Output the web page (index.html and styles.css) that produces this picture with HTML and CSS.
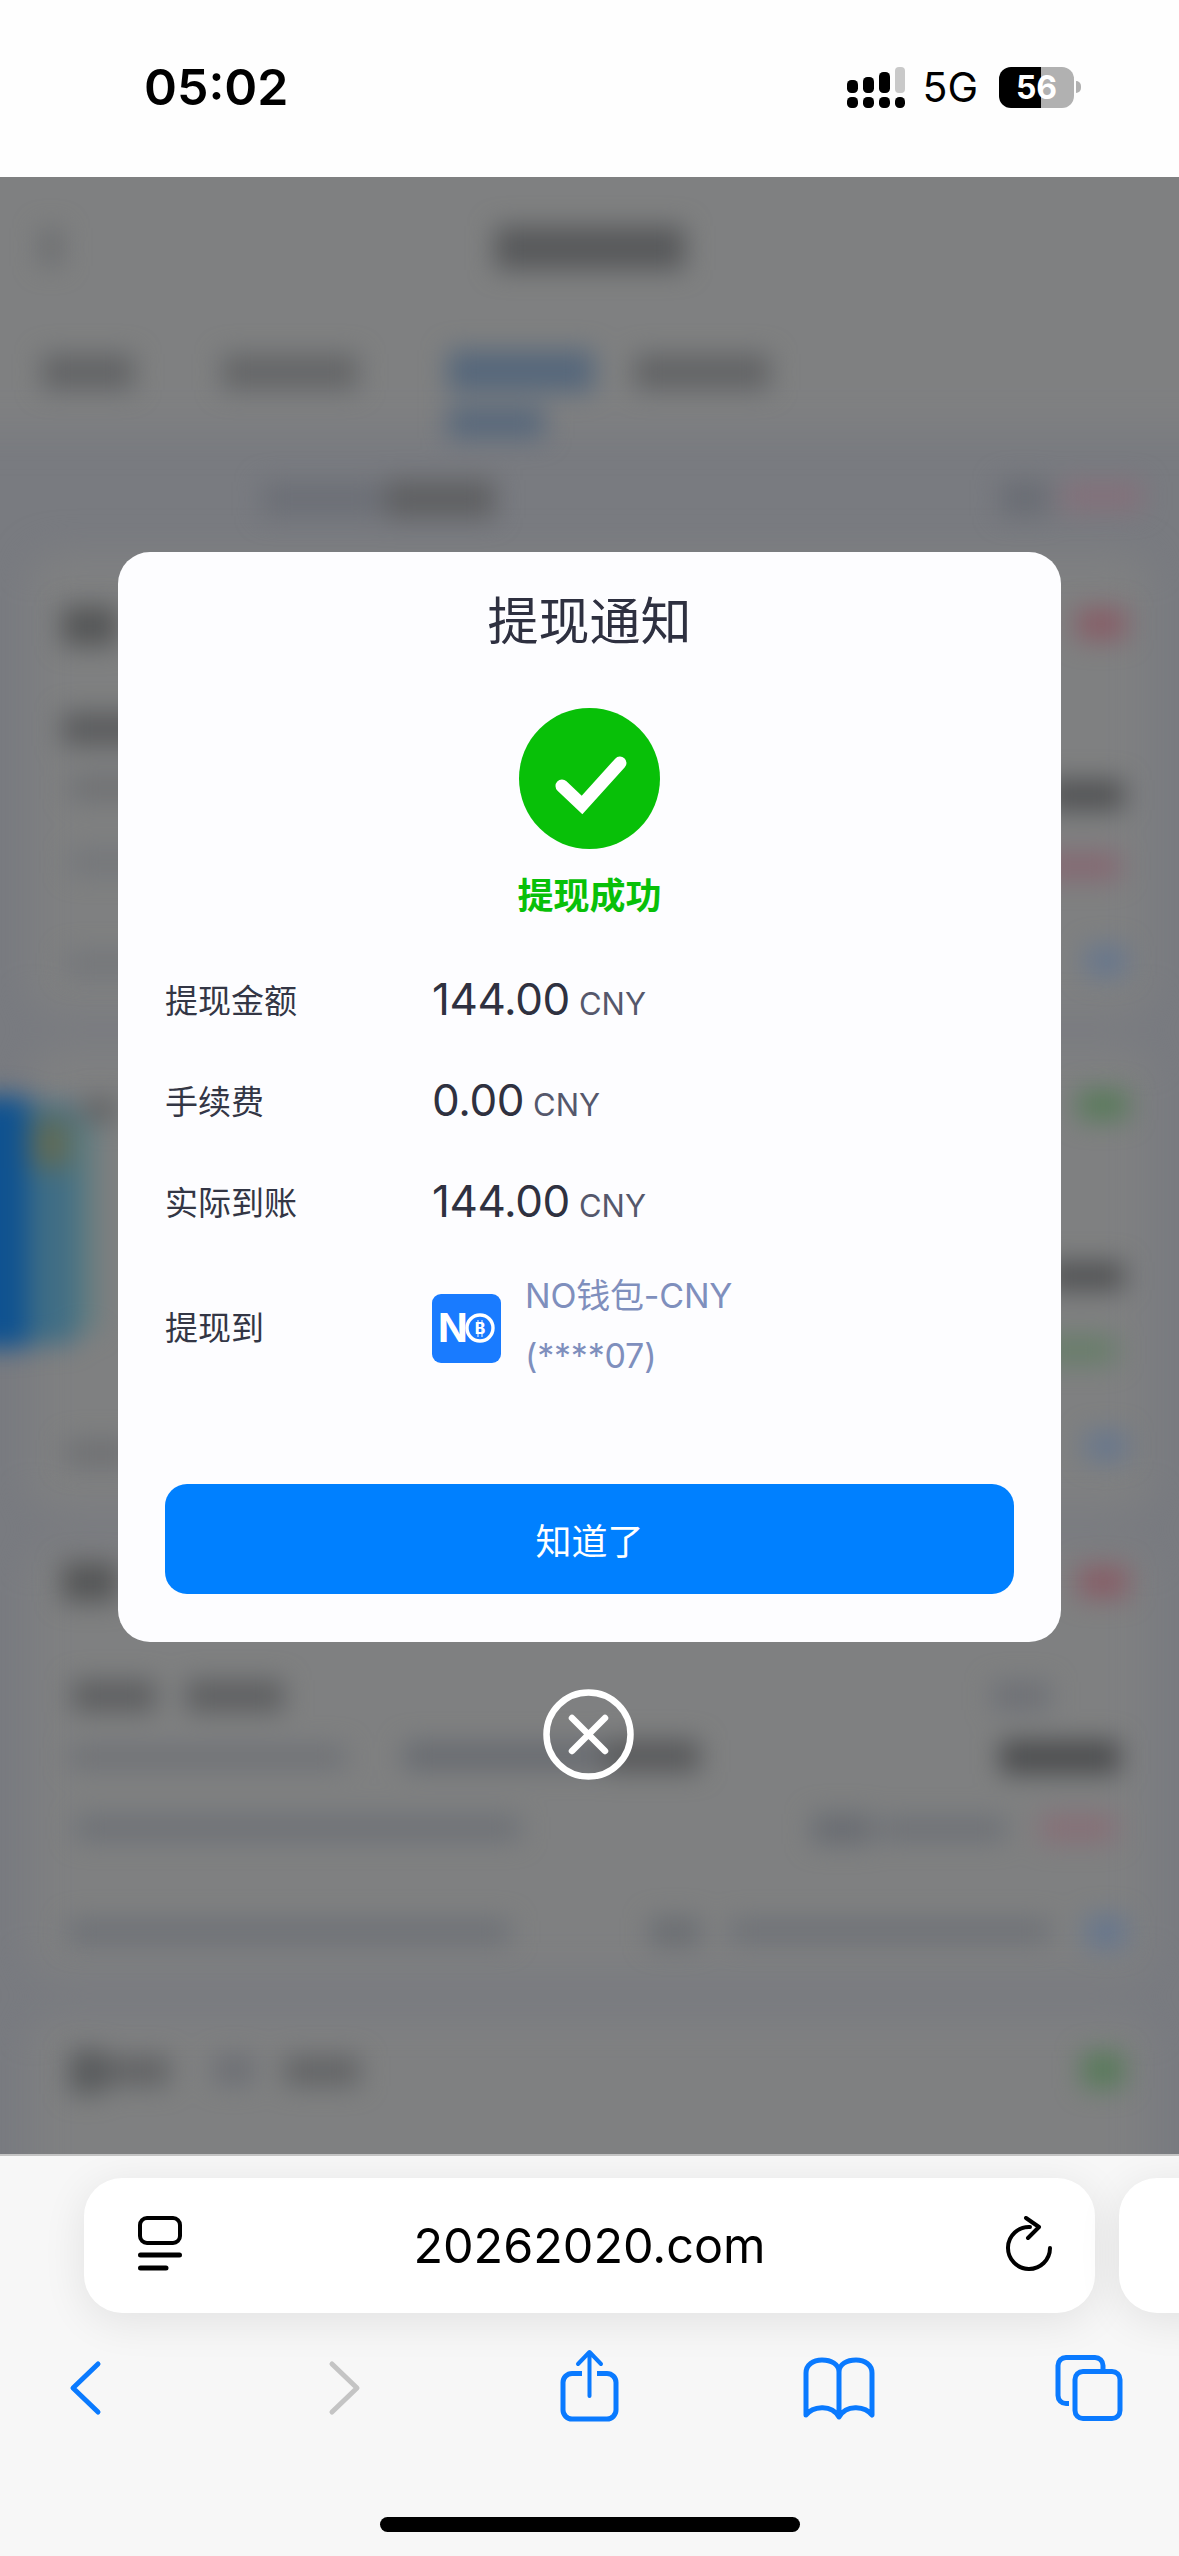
FILE: index.html
```html
<!DOCTYPE html>
<html lang="zh-CN">
<head>
  <meta charset="UTF-8">
  <title>提现通知</title>
  <meta name="viewport" content="width=device-width, initial-scale=1">
  <link rel="stylesheet" href="styles.css">
</head>
<body>
  <header class="status-bar">
    <div class="status-time">05:02</div>
    <div class="status-right">
      <svg class="signal" width="58" height="41" viewBox="0 0 58 41">
        <rect x="0" y="30" width="11" height="11" rx="4.5"/>
        <rect x="16" y="30" width="11" height="11" rx="4.5"/>
        <rect x="32" y="30" width="11" height="11" rx="4.5"/>
        <rect x="48" y="30" width="10" height="11" rx="4.5"/>
        <rect x="0" y="13" width="11" height="13" rx="4.5"/>
        <rect x="16" y="10" width="11" height="16" rx="4.5"/>
        <rect x="32" y="5" width="11" height="21" rx="4.5"/>
        <rect x="48" y="0" width="10" height="26" rx="4" fill="#c9c9c9"/>
      </svg>
      <span class="network">5G</span>
      <div class="battery">56</div>
    </div>
  </header>

  <main class="page">
    <!-- page behind the dialog, blurred and dimmed -->
    <svg class="backdrop" width="1179" height="1977" viewBox="0 177 1179 1977" preserveAspectRatio="none">
      <defs>
        <filter id="soft" x="-5%" y="-5%" width="110%" height="110%" color-interpolation-filters="sRGB">
          <feGaussianBlur stdDeviation="13"/>
        </filter>
        <filter id="softer" x="-5%" y="-5%" width="110%" height="110%" color-interpolation-filters="sRGB">
          <feGaussianBlur stdDeviation="18"/>
        </filter>
      </defs>
      <rect x="0" y="177" width="1179" height="1977" fill="#797b80"/>
      <g filter="url(#softer)">
        <rect x="-60" y="120" width="1300" height="312" fill="#7f8081"/>
        <rect x="30" y="552" width="1120" height="462" rx="28" fill="#7f8081"/>
        <rect x="30" y="1046" width="1120" height="466" rx="28" fill="#7f8081"/>
        <rect x="30" y="1546" width="1120" height="430" rx="28" fill="#7f8081"/>
        <rect x="30" y="2016" width="1120" height="190" rx="28" fill="#7f8081"/>
      </g>
      <g filter="url(#soft)">
        <rect x="40" y="228" width="22" height="38" fill="#6d6e70"/>
        <rect x="495" y="226" width="190" height="44" fill="#58595b"/>

        <rect x="42" y="354" width="92" height="36" fill="#636466"/>
        <rect x="222" y="354" width="136" height="36" fill="#656668"/>
        <rect x="448" y="350" width="146" height="42" fill="#56677b"/>
        <rect x="448" y="408" width="96" height="30" fill="#56677b"/>
        <rect x="634" y="354" width="136" height="36" fill="#636466"/>

        <rect x="262" y="482" width="120" height="34" fill="#6c6f76"/>
        <rect x="385" y="480" width="110" height="38" fill="#5f6062"/>
        <rect x="1000" y="480" width="50" height="36" fill="#6a6d74"/>
        <rect x="1062" y="482" width="80" height="28" fill="#84707a"/>

        <rect x="62" y="606" width="56" height="40" fill="#555657"/>
        <rect x="1076" y="608" width="50" height="32" fill="#875d67"/>
        <rect x="62" y="712" width="120" height="34" fill="#5b5c5e"/>
        <rect x="70" y="776" width="80" height="24" fill="#6f7073"/>
        <rect x="1046" y="780" width="78" height="30" fill="#505153"/>
        <rect x="70" y="850" width="80" height="24" fill="#74767a"/>
        <rect x="1040" y="852" width="80" height="28" fill="#856872"/>
        <rect x="66" y="952" width="80" height="24" fill="#74767a"/>
        <rect x="1086" y="946" width="40" height="30" fill="#66768e"/>

        <rect x="-30" y="1096" width="58" height="252" fill="#0f5290"/>
        <rect x="28" y="1104" width="46" height="240" fill="#3f6d85"/>
        <rect x="74" y="1116" width="22" height="216" fill="#5e7b80"/>
        <rect x="30" y="1118" width="40" height="50" fill="#5f6b58"/>
        <rect x="82" y="1098" width="36" height="24" fill="#636466"/>
        <rect x="1078" y="1090" width="50" height="30" fill="#587a5a"/>
        <rect x="1046" y="1262" width="78" height="28" fill="#505153"/>
        <rect x="1040" y="1336" width="76" height="28" fill="#677d69"/>
        <rect x="66" y="1440" width="70" height="26" fill="#6f7073"/>
        <rect x="1086" y="1432" width="40" height="28" fill="#66768e"/>

        <rect x="62" y="1562" width="56" height="40" fill="#555657"/>
        <rect x="1078" y="1566" width="50" height="32" fill="#875d67"/>
        <rect x="72" y="1680" width="84" height="32" fill="#5e5f61"/>
        <rect x="186" y="1680" width="98" height="32" fill="#5e5f61"/>
        <rect x="992" y="1682" width="58" height="28" fill="#6e7076"/>
        <rect x="70" y="1746" width="276" height="22" fill="#6f7176"/>
        <rect x="404" y="1742" width="200" height="28" fill="#686b71"/>
        <rect x="604" y="1740" width="96" height="32" fill="#58595b"/>
        <rect x="1000" y="1740" width="120" height="34" fill="#4c4d4f"/>
        <rect x="76" y="1816" width="444" height="24" fill="#6d7076"/>
        <rect x="812" y="1814" width="60" height="30" fill="#696c72"/>
        <rect x="880" y="1818" width="126" height="22" fill="#6d7076"/>
        <rect x="1040" y="1814" width="76" height="28" fill="#876f77"/>
        <rect x="68" y="1920" width="442" height="24" fill="#6d7076"/>
        <rect x="650" y="1918" width="50" height="28" fill="#6a6d72"/>
        <rect x="730" y="1920" width="320" height="22" fill="#6d7076"/>
        <rect x="1086" y="1916" width="40" height="32" fill="#66768e"/>

        <rect x="70" y="2050" width="34" height="44" fill="#585a5c"/>
        <rect x="104" y="2056" width="66" height="30" fill="#626365"/>
        <rect x="214" y="2056" width="40" height="28" fill="#6c6e74"/>
        <rect x="284" y="2056" width="76" height="30" fill="#636466"/>
        <rect x="1082" y="2052" width="42" height="36" fill="#587a5a"/>
      </g>
    </svg>

    <div class="overlay">
      <section class="dialog">
        <h2 class="dialog-title">提现通知</h2>
        <svg class="success-icon" width="141" height="141" viewBox="0 0 141 141">
          <circle cx="70.5" cy="70.5" r="70.5" fill="#08c008"/>
          <path d="M43 78 L63 97 L101 55" fill="none" stroke="#fff" stroke-width="13" stroke-linecap="round"/>
        </svg>
        <div class="success-text">提现成功</div>

        <div class="info-row first">
          <div class="info-label">提现金额</div>
          <div class="info-value">144.00 <span class="unit">CNY</span></div>
        </div>
        <div class="info-row">
          <div class="info-label">手续费</div>
          <div class="info-value">0.00 <span class="unit">CNY</span></div>
        </div>
        <div class="info-row">
          <div class="info-label">实际到账</div>
          <div class="info-value">144.00 <span class="unit">CNY</span></div>
        </div>
        <div class="info-row wallet-row">
          <div class="info-label">提现到</div>
          <svg class="wallet-logo" width="69" height="69" viewBox="0 0 69 69">
            <rect width="69" height="69" rx="9" fill="#197bff"/>
            <text x="6" y="48" font-family="Inter, sans-serif" font-weight="700" font-size="39" fill="#fff">N</text>
            <circle cx="48" cy="34" r="13" fill="none" stroke="#fff" stroke-width="3.4"/>
            <text x="48" y="40" text-anchor="middle" font-family="Inter, sans-serif" font-weight="700" font-size="16" fill="#fff">B</text>
            <path d="M46 26 V43 M50 26 V43" fill="none" stroke="#fff" stroke-width="1"/>
          </svg>
          <div class="wallet-name">NO钱包-CNY<br>(****07)</div>
        </div>

        <button class="confirm-btn">知道了</button>
      </section>

      <svg class="close-icon" width="91" height="91" viewBox="0 0 91 91">
        <circle cx="45.5" cy="45.5" r="42" fill="none" stroke="#fff" stroke-width="6.5"/>
        <path d="M29 29 L62 62 M62 29 L29 62" fill="none" stroke="#fff" stroke-width="6.5" stroke-linecap="round"/>
      </svg>
    </div>
  </main>

  <footer class="browser-bar">
    <div class="url-row">
      <div class="url-pill">
        <svg class="reader-icon" width="44" height="56" viewBox="0 0 44 56">
          <rect x="2" y="2" width="40" height="25" rx="7" fill="none" stroke="#000" stroke-width="4"/>
          <path d="M2.5 39 H41.5 M2.5 52 H28" fill="none" stroke="#000" stroke-width="5" stroke-linecap="round"/>
        </svg>
        <div class="url-text">20262020.com</div>
        <svg class="reload-icon" width="50" height="56" viewBox="0 0 50 56">
          <path d="M26 11 A21 21 0 1 0 46 32" fill="none" stroke="#000" stroke-width="4" stroke-linecap="round"/>
          <path d="M22 2 L35 11 L24 22" fill="none" stroke="#000" stroke-width="4" stroke-linecap="round" stroke-linejoin="round"/>
        </svg>
      </div>
      <div class="url-pill next"></div>
    </div>

    <nav class="nav-row">
      <svg width="80" height="80" viewBox="0 0 80 80">
        <path d="M52 19 L27 43 L52 67" fill="none" stroke="#0a7aff" stroke-width="5" stroke-linecap="round" stroke-linejoin="round"/>
      </svg>
      <svg width="80" height="80" viewBox="0 0 80 80">
        <path d="M35 19 L60 43 L35 67" fill="none" stroke="#c4c4c4" stroke-width="5" stroke-linecap="round" stroke-linejoin="round"/>
      </svg>
      <svg width="80" height="80" viewBox="1 0 80 80">
        <path d="M35 28.5 H25 a9 9 0 0 0 -9 9 V65 a9 9 0 0 0 9 9 H60 a9 9 0 0 0 9 -9 V37.5 a9 9 0 0 0 -9 -9 H50" fill="none" stroke="#0a7aff" stroke-width="5"/>
        <path d="M42.5 8 V51 M31 19 L42.5 7 L54 19" fill="none" stroke="#0a7aff" stroke-width="4" stroke-linecap="round" stroke-linejoin="round"/>
      </svg>
      <svg width="80" height="80" viewBox="0 0 80 80">
        <path d="M41 27 C41 19 33 15 24 15 C15 15 8 20 8 28 V70 C14 62 33 58 41 72 C49 58 68 62 74 70 V28 C74 20 67 15 58 15 C49 15 41 19 41 27 V72" fill="none" stroke="#0a7aff" stroke-width="5" stroke-linejoin="round"/>
      </svg>
      <svg width="80" height="80" viewBox="0 0 80 80">
        <path d="M20 58.5 H17 a8 8 0 0 1 -8 -8 V20.5 a8 8 0 0 1 8 -8 H46 a8 8 0 0 1 8 8 V24" fill="none" stroke="#0a7aff" stroke-width="5"/>
        <rect x="26" y="26.5" width="45" height="47" rx="8" fill="none" stroke="#0a7aff" stroke-width="5"/>
      </svg>
    </nav>

    <div class="home-indicator"></div>
  </footer>
</body>
</html>
```

FILE: styles.css
```css
* {
  box-sizing: border-box;
}

html, body {
  margin: 0;
  height: 100%;
}

body {
  width: 1179px;
  height: 2556px;
  display: flex;
  flex-direction: column;
  overflow: hidden;
  font-family: Inter, "Noto Sans CJK SC", sans-serif;
  background: #f7f7f7;
}

/* status bar */
.status-bar {
  height: 177px;
  flex: none;
  background: #fefefe;
  display: flex;
  justify-content: space-between;
  align-items: flex-start;
  padding: 67px 105px 0 144px;
}

.status-time {
  font-size: 50px;
  font-weight: 600;
  line-height: 41px;
  color: #000;
}

.status-right {
  display: flex;
  align-items: center;
  height: 41px;
}

.network {
  margin-left: 17px;
  font-size: 41px;
  line-height: 41px;
  color: #000;
}

.battery {
  position: relative;
  margin-left: 21px;
  width: 75px;
  height: 41px;
  border-radius: 12px;
  background: linear-gradient(90deg, #000 42px, #b1b1b1 42px);
  color: #fff;
  font-size: 32px;
  font-weight: 700;
  line-height: 41px;
  text-align: center;
}

.battery::after {
  content: "";
  position: absolute;
  left: 77px;
  top: 14px;
  width: 5px;
  height: 12px;
  border-radius: 0 6px 6px 0;
  background: #b1b1b1;
}

/* blurred page + overlay */
.page {
  position: relative;
  flex: 1;
  overflow: hidden;
}

.backdrop {
  display: block;
}

.overlay {
  position: absolute;
  inset: 0;
  display: flex;
  flex-direction: column;
  align-items: center;
  padding-top: 375px;
}

.dialog {
  width: 943px;
  height: 1090px;
  padding: 35px 47px 47px;
  display: flex;
  flex-direction: column;
  background: #fdfdff;
  border-radius: 32px;
}

.dialog-title {
  margin: 0;
  font-size: 51px;
  font-weight: 400;
  line-height: 70px;
  text-align: center;
  color: #2e3040;
}

.success-icon {
  display: block;
  margin: 51px auto 0;
  flex: none;
}

.success-text {
  margin-top: 22px;
  font-size: 36px;
  font-weight: 700;
  line-height: 50px;
  text-align: center;
  color: #08c008;
}

.info-row {
  display: flex;
  align-items: center;
  height: 101px;
}

.info-row.first {
  margin-top: 27px;
}

.wallet-row {
  height: 120px;
  margin-top: 15px;
}

.info-label {
  width: 267px;
  flex: none;
  font-size: 33px;
  color: #333645;
}

.info-value {
  font-size: 44px;
  letter-spacing: -0.4px;
  word-spacing: -3px;
  color: #2f3140;
}

.unit {
  font-size: 31px;
  letter-spacing: 0;
  color: #55586c;
}

.wallet-logo {
  flex: none;
  margin-top: 4px;
}

.wallet-name {
  margin-left: 24px;
  font-size: 34px;
  letter-spacing: -0.2px;
  line-height: 60px;
  color: #7f8fbd;
}

.confirm-btn {
  margin-top: 98px;
  height: 110px;
  flex: none;
  border: none;
  border-radius: 22px;
  background: #0080ff;
  color: #fff;
  font-family: inherit;
  font-size: 36px;
}

.close-icon {
  display: block;
  margin: 47px 2px 0 0;
  flex: none;
}

/* safari bar */
.browser-bar {
  height: 402px;
  flex: none;
  border-top: 2px solid #c4c4c4;
  background: #f7f7f7;
  overflow: hidden;
}

.url-row {
  display: flex;
  gap: 24px;
  padding: 22px 0 0 84px;
}

.url-pill {
  width: 1011px;
  height: 135px;
  flex: none;
  padding: 0 41px;
  display: grid;
  grid-template-columns: 1fr auto 1fr;
  align-items: center;
  background: #fff;
  border-radius: 38px;
  box-shadow: 0 8px 44px rgba(0, 0, 0, 0.09);
}

.url-pill.next {
  width: 200px;
}

.reader-icon {
  margin: -3px 0 0 13px;
}

.reload-icon {
  justify-self: end;
  margin-top: -4px;
}

.url-text {
  font-size: 48.5px;
  color: #000;
}

.nav-row {
  display: flex;
  justify-content: space-between;
  padding: 32px 50px 0 46px;
}

.nav-row svg {
  display: block;
}

.home-indicator {
  width: 420px;
  height: 15px;
  margin: 92px auto 0;
  border-radius: 8px;
  background: #000;
}
```
